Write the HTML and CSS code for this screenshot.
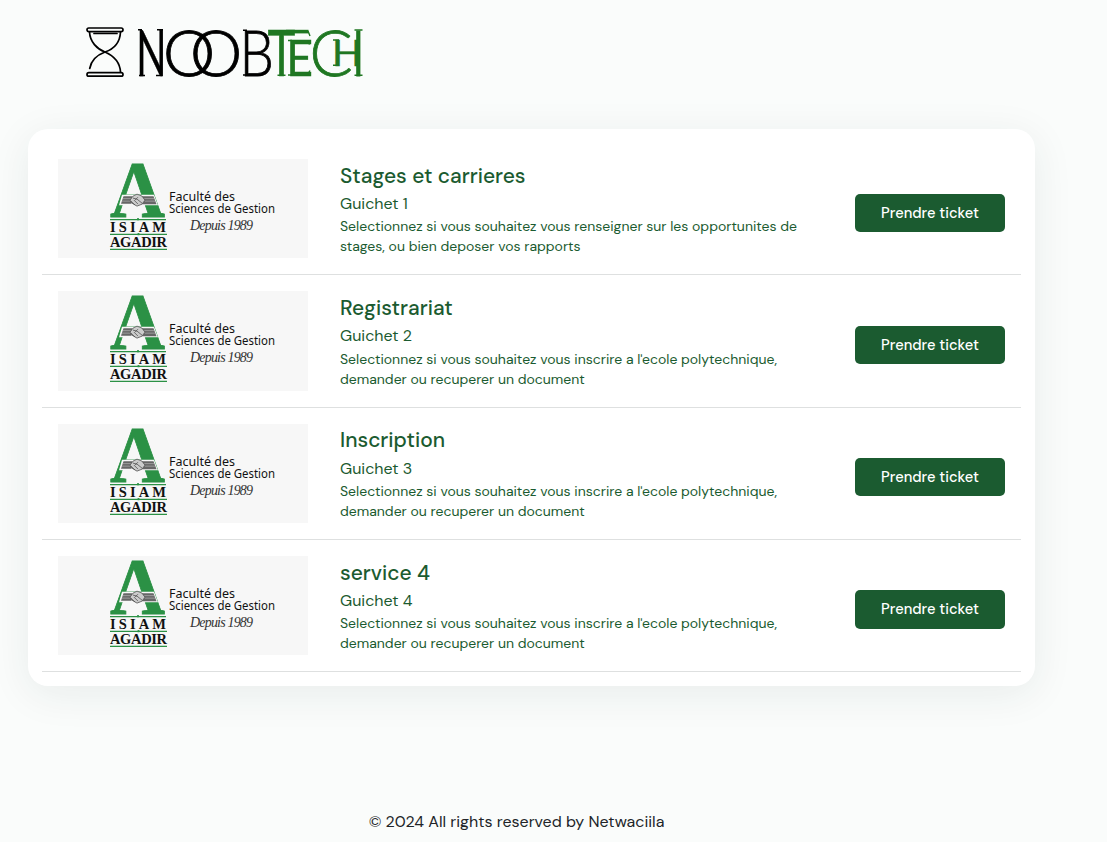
FILE: index.html
```
<!DOCTYPE html>
<html lang="fr">
<head>
<meta charset="utf-8">
<title>NoobTech</title>
<link rel="stylesheet" href="styles.css">
</head>
<body>
<svg class="defs" width="0" height="0" aria-hidden="true">
  <symbol id="emblem" viewBox="0 0 250 99">
    <path d="M52 60.500H108M52 75.200H109M52 90.300H109" stroke="#2b9145" stroke-width="1.200"/>
    <circle cx="80" cy="60" r="1.200" fill="#2b9145"/><circle cx="80.500" cy="75" r="1.200" fill="#2b9145"/>
    <path d="M64 35.500h32l4 10.500H61z" fill="#f7f7f7"/>
    <path d="M65.500 37h9l-1 7.500H63zM84 37h11.500l3 8H84z" fill="#666"/>
    <path d="M65 39.500h9M64 42h8M86 39.500h10M87 42h10" stroke="#aaa" stroke-width=".8"/>
    <path d="M72 41l3-4 4-2 5 2 3 4-3 4-5 2-5-3z" fill="#ccc" stroke="#555" stroke-width=".8"/>
    <path d="M75 39l4 1 5 4M73 42l4 4M76 41l4 4M80 38l-3 3" fill="none" stroke="#444" stroke-width=".7"/>
  </symbol>
</svg>
<header class="header">
  <svg class="logo" viewBox="0 0 280 60" role="img" aria-label="NoobTech">
    <g fill="none" stroke="#000" stroke-width="1.700" stroke-linecap="round" stroke-linejoin="round">
      <rect x="1" y="6" width="36" height="3.600" rx="1.800"/>
      <rect x="1" y="50.600" width="36" height="3.600" rx="1.800"/>
      <path d="M3.500 10C4 20 11 27 19 30C28 34 34 41 34.500 50M34.500 10C34 20 28 27 19 30C11 33 5 39 3.700 46.500M8 11.500H31"/>
    </g>
    <g class="logo-black">
      <text class="caps" transform="translate(50.200 53.500) scale(.62 1)">N</text>
      <text class="round" transform="translate(76.800 53.500) scale(1.040 1)">O</text>
      <text class="round" transform="translate(103.800 53.500) scale(1.040 1)">O</text>
      <text class="round" transform="translate(153.500 53.500) scale(.85 1)">B</text>
      <path class="serif" d="M52 7.800h4M53 53.500h6M71 7.800h6M70 53.500h6M157 8.300h4M157 53h4"/>
    </g>
    <g class="logo-green">
      <text class="caps" transform="translate(181.500 53.500) scale(.74 1)">T</text>
      <path d="M200 9.600H222.500" stroke-width="3.600"/>
      <text class="caps-e" transform="translate(200 53.500) scale(.93 1)">E</text>
      <text class="round" transform="translate(223.500 53.500)">C</text>
      <text class="caps-h" transform="translate(246 43.700) scale(1.100 1)">H</text>
      <text class="round" transform="translate(264 53.500)">I</text>
      <path class="serif" d="M183 13l1.500-4M222 9l2 5M191.500 53.300h8M202 18.500h4M202 53h4M221.500 18.500l2 4M221.500 52.500l2.500-4M247 18h6M247 43.200h6M268.500 8h8M268.500 53.300h8"/>
    </g>
  </svg>
</header>
<main class="card">
  <section class="row">
    <svg class="thumb" viewBox="0 0 250 99"><text class="big-a" x="52" y="58" textLength="55" lengthAdjust="spacingAndGlyphs">A</text><use href="#emblem"/><text class="isiam" x="52" y="73" textLength="56">ISIAM</text><text class="agadir" x="52" y="88" textLength="57">AGADIR</text><text class="fac" x="111" y="42" textLength="66">Faculté des</text><text class="fac" x="111" y="54.300" textLength="106" lengthAdjust="spacingAndGlyphs">Sciences de Gestion</text><text class="since" x="132" y="70.500" textLength="63">Depuis 1989</text></svg>
    <div class="info"><h2 class="title">Stages et carrieres</h2><p class="desk">Guichet 1</p><p class="desc">Selectionnez si vous souhaitez vous renseigner sur les opportunites de<br>stages, ou bien deposer vos rapports</p></div>
    <button class="btn">Prendre ticket</button>
  </section>
  <section class="row">
    <svg class="thumb" viewBox="0 0 250 99"><text class="big-a" x="52" y="58" textLength="55" lengthAdjust="spacingAndGlyphs">A</text><use href="#emblem"/><text class="isiam" x="52" y="73" textLength="56">ISIAM</text><text class="agadir" x="52" y="88" textLength="57">AGADIR</text><text class="fac" x="111" y="42" textLength="66">Faculté des</text><text class="fac" x="111" y="54.300" textLength="106" lengthAdjust="spacingAndGlyphs">Sciences de Gestion</text><text class="since" x="132" y="70.500" textLength="63">Depuis 1989</text></svg>
    <div class="info"><h2 class="title">Registrariat</h2><p class="desk">Guichet 2</p><p class="desc">Selectionnez si vous souhaitez vous inscrire a l'ecole polytechnique,<br>demander ou recuperer un document</p></div>
    <button class="btn">Prendre ticket</button>
  </section>
  <section class="row">
    <svg class="thumb" viewBox="0 0 250 99"><text class="big-a" x="52" y="58" textLength="55" lengthAdjust="spacingAndGlyphs">A</text><use href="#emblem"/><text class="isiam" x="52" y="73" textLength="56">ISIAM</text><text class="agadir" x="52" y="88" textLength="57">AGADIR</text><text class="fac" x="111" y="42" textLength="66">Faculté des</text><text class="fac" x="111" y="54.300" textLength="106" lengthAdjust="spacingAndGlyphs">Sciences de Gestion</text><text class="since" x="132" y="70.500" textLength="63">Depuis 1989</text></svg>
    <div class="info"><h2 class="title">Inscription</h2><p class="desk">Guichet 3</p><p class="desc">Selectionnez si vous souhaitez vous inscrire a l'ecole polytechnique,<br>demander ou recuperer un document</p></div>
    <button class="btn">Prendre ticket</button>
  </section>
  <section class="row">
    <svg class="thumb" viewBox="0 0 250 99"><text class="big-a" x="52" y="58" textLength="55" lengthAdjust="spacingAndGlyphs">A</text><use href="#emblem"/><text class="isiam" x="52" y="73" textLength="56">ISIAM</text><text class="agadir" x="52" y="88" textLength="57">AGADIR</text><text class="fac" x="111" y="42" textLength="66">Faculté des</text><text class="fac" x="111" y="54.300" textLength="106" lengthAdjust="spacingAndGlyphs">Sciences de Gestion</text><text class="since" x="132" y="70.500" textLength="63">Depuis 1989</text></svg>
    <div class="info"><h2 class="title">service 4</h2><p class="desk">Guichet 4</p><p class="desc">Selectionnez si vous souhaitez vous inscrire a l'ecole polytechnique,<br>demander ou recuperer un document</p></div>
    <button class="btn">Prendre ticket</button>
  </section>
</main>
<footer class="footer">© 2024 All rights reserved by Netwaciila</footer>
</body>
</html>
```
FILE: styles.css
```
* { box-sizing: border-box; }
body {
  margin: 0;
  height: 842px;
  overflow: hidden;
  background: #fafcfb;
  font-family: "DM Sans", Inter, sans-serif;
  color: #1b5b30;
}
.defs { display: block; height: 0; }
.header { height: 129px; padding: 22px 0 0 86px; }
.logo { display: block; width: 280px; height: 60px; overflow: visible; opacity: .995; }
.logo-black { fill: #000; stroke: #000; }
.logo-green { fill: #1f7722; stroke: #1f7722; }
.caps, .caps-e, .caps-h, .round {
  font-family: Lato, sans-serif;
  font-weight: 400;
  font-size: 64px;
  stroke-width: .3px;
}
.caps-e { font-size: 50.500px; }
.caps-h { font-size: 36px; stroke-width: .5px; }
.round { font-weight: 300; stroke-width: .8px; }
.serif { fill: none; stroke-width: 1.400px; }
.card {
  width: 1007px;
  height: 557px;
  margin-left: 28px;
  padding: 14px;
  border-radius: 20px;
  background: #fff;
  box-shadow: 0 8px 40px rgba(20, 50, 50, .08);
}
.row {
  display: flex;
  height: 132.250px;
  padding: 16px;
  border-bottom: 1px solid #dee0e0;
}
.thumb { flex: none; width: 250px; height: 99.250px; background: #f7f7f7; overflow: visible; }
.info { flex: 1; margin-left: 32px; white-space: nowrap; }
.title { margin: 3.800px 0 0; font-size: 20.950px; font-weight: 500; line-height: 26px; }
.desk { margin: 3.300px 0 0; font-size: 16px; line-height: 24px; }
.desc { margin: .300px 0 0; font-size: 14px; line-height: 20px; }
.btn {
  flex: none;
  width: 150px;
  height: 38.200px;
  margin-top: 34.600px;
  padding: 0;
  border: 0;
  border-radius: 5px;
  background: #1b5b30;
  color: #fff;
  font: 500 14.700px/38px "DM Sans", Inter, sans-serif;
}
.footer {
  width: 1033px;
  margin-top: 124px;
  text-align: center;
  font-size: 16px;
  line-height: 24px;
  color: #212529;
}
.big-a { font: bold 79.500px "Liberation Serif", serif; fill: #2b9145; stroke: #2b9145; stroke-width: .8px; }
.isiam, .agadir { font: bold 14.500px "Liberation Serif", serif; fill: #111; }
.fac { font: 12.500px "Noto Sans", sans-serif; fill: #111; }
.since { font: italic 14px "Liberation Serif", serif; fill: #333; }
```
